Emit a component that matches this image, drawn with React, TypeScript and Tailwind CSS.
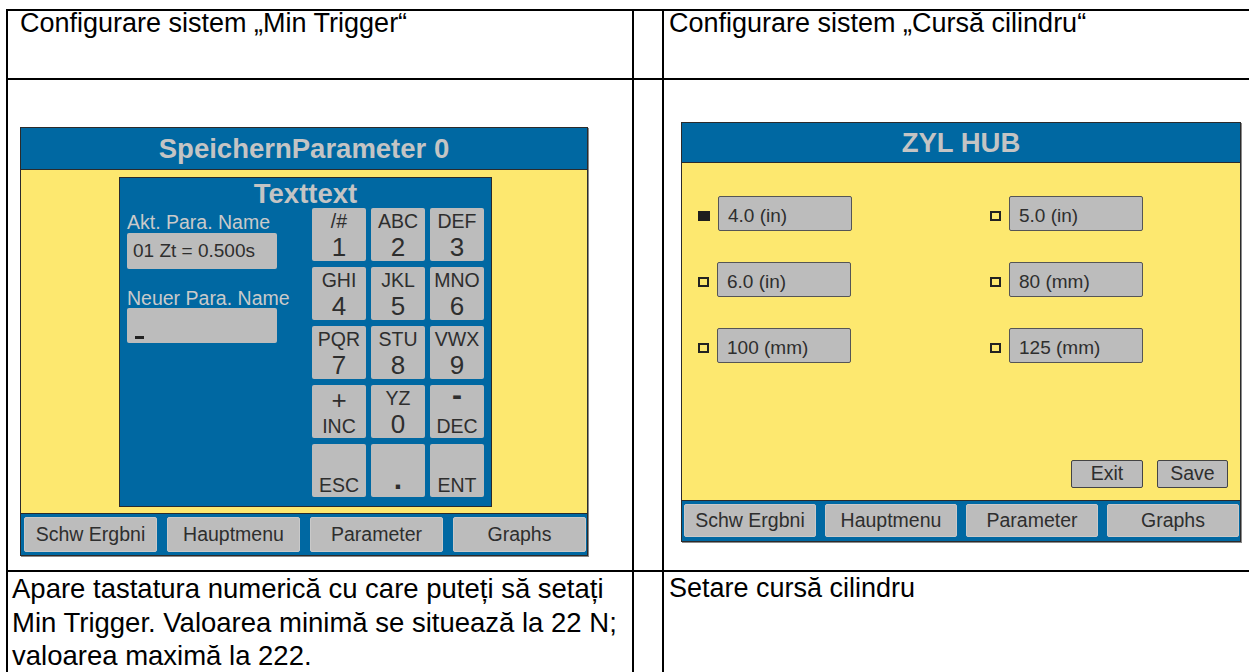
type KeyDef = { top?: string; num?: string; bottom?: string; sign?: string; dot?: boolean };

const keys: KeyDef[] = [
  { top: '/#', num: '1' },
  { top: 'ABC', num: '2' },
  { top: 'DEF', num: '3' },
  { top: 'GHI', num: '4' },
  { top: 'JKL', num: '5' },
  { top: 'MNO', num: '6' },
  { top: 'PQR', num: '7' },
  { top: 'STU', num: '8' },
  { top: 'VWX', num: '9' },
  { sign: '+', bottom: 'INC' },
  { top: 'YZ', num: '0' },
  { sign: '-', bottom: 'DEC' },
  { bottom: 'ESC' },
  { dot: true },
  { bottom: 'ENT' },
];

const options = [
  { label: '4.0 (in)', checked: true },
  { label: '5.0 (in)', checked: false },
  { label: '6.0 (in)', checked: false },
  { label: '80 (mm)', checked: false },
  { label: '100 (mm)', checked: false },
  { label: '125 (mm)', checked: false },
];

const navItems = ['Schw Ergbni', 'Hauptmenu', 'Parameter', 'Graphs'];

function Key({ top, num, bottom, sign, dot }: KeyDef) {
  return (
    <div className="flex h-[53px] w-[54px] flex-col items-center rounded-[2px] bg-[#bcbcbc] text-[#2e2e2e]">
      {num && (
        <>
          <span className="mt-[4px] text-[19.5px] leading-[19px]">{top}</span>
          <span className="mt-[3px] text-[26px] leading-[26px]">{num}</span>
        </>
      )}
      {sign === '+' && <span className="mt-[3px] text-[26px] leading-[24px]">+</span>}
      {sign === '-' && <span className="text-[30px] font-bold leading-[20px]">-</span>}
      {bottom && <span className="mb-[2px] mt-auto text-[19.5px] leading-[19px]">{bottom}</span>}
      {dot && <span className="mb-[8px] mt-auto text-[30px] font-bold leading-[20px]">.</span>}
    </div>
  );
}

function NavBar({ big }: { big?: boolean }) {
  return (
    <div
      className={
        big
          ? 'flex h-[42px] gap-[10px] border-t border-[#2b2b2b] bg-[#0068a2] pl-[3px] pt-[3px]'
          : 'flex h-[41px] gap-[9px] border-t border-[#2b2b2b] bg-[#0068a2] pl-[2px] pt-[3px]'
      }
    >
      {navItems.map((item) => (
        <div
          key={item}
          className={
            big
              ? 'flex h-[35px] w-[133px] items-center justify-center rounded-[2px] border border-[#c9c9c9] bg-[#bcbcbc] text-[19.5px] text-[#2e2e2e]'
              : 'flex h-[33px] w-[132px] items-center justify-center rounded-[2px] border border-[#c9c9c9] bg-[#bcbcbc] text-[19.5px] text-[#2e2e2e]'
          }
        >
          {item}
        </div>
      ))}
    </div>
  );
}

function SaveParamScreen() {
  return (
    <div className="flex w-[568px] flex-col border border-[#2b2b2b] bg-[#fde86f] shadow-[1px_1px_0_#8a8a8a]">
      <div className="flex h-[42px] items-center justify-center border-b border-[#2b2b2b] bg-[#0068a2] text-[27.5px] font-bold text-[#c4c4c4]">
        SpeichernParameter 0
      </div>
      <div className="h-[343px] pl-[98px] pt-[7px]">
        <div className="flex h-[330px] w-[373px] flex-col border border-[#2b2b2b] bg-[#0068a2]">
          <div className="h-[30px] pt-[2px] text-center text-[27.5px] font-bold leading-[27px] text-[#c4c4c4]">
            Texttext
          </div>
          <div className="flex">
            <div className="ml-[7px] w-[150px]">
              <div className="mt-[4px] whitespace-nowrap text-[19.5px] leading-[20px] text-[#cacaca]">Akt. Para. Name</div>
              <div className="mt-[1px] flex h-[36px] items-center rounded-[2px] bg-[#bcbcbc] pl-[6px] text-[19px] text-[#2e2e2e]">
                01 Zt = 0.500s
              </div>
              <div className="mt-[19px] whitespace-nowrap text-[19.5px] leading-[20px] text-[#cacaca]">Neuer Para. Name</div>
              <div className="flex h-[35px] items-end rounded-[2px] bg-[#bcbcbc] pb-[4px] pl-[8px]">
                <div className="h-[3px] w-[9px] bg-[#222]" />
              </div>
            </div>
            <div className="ml-auto mr-[7px] grid grid-cols-[54px_54px_54px] gap-x-[5px] gap-y-[6px]">
              {keys.map((k, i) => (
                <Key key={i} {...k} />
              ))}
            </div>
          </div>
        </div>
      </div>
      <NavBar big />
    </div>
  );
}

function ZylHubScreen() {
  return (
    <div className="flex w-[560px] flex-col border border-[#2b2b2b] bg-[#fde86f] shadow-[1px_1px_0_#8a8a8a]">
      <div className="flex h-[40px] items-center justify-center border-b border-[#2b2b2b] bg-[#0068a2] text-[27.5px] font-bold text-[#c4c4c4]">
        ZYL HUB
      </div>
      <div className="flex h-[337px] flex-col">
        <div className="mt-[33px] grid grid-cols-[292px_auto] gap-y-[31px] pl-[16px]">
          {options.map((o) => (
            <div key={o.label} className="flex items-center gap-[8px]">
              <div
                className={
                  o.checked
                    ? 'mt-[5px] h-[10px] w-[12px] bg-[#1e1e1e]'
                    : 'mt-[5px] h-[10px] w-[11px] border-2 border-[#222]'
                }
              />
              <div className="flex h-[35px] w-[134px] items-center rounded-[2px] border border-[#555] bg-[#bcbcbc] pl-[9px] pt-[6px] text-[19px] text-[#2e2e2e]">
                {o.label}
              </div>
            </div>
          ))}
        </div>
        <div className="mb-[12px] mr-[12px] mt-auto flex justify-end gap-[14px]">
          <div className="flex h-[28px] w-[72px] items-center justify-center rounded-[2px] border border-[#444] bg-[#bcbcbc] text-[19.5px] text-[#2e2e2e]">
            Exit
          </div>
          <div className="flex h-[28px] w-[71px] items-center justify-center rounded-[2px] border border-[#444] bg-[#bcbcbc] text-[19.5px] text-[#2e2e2e]">
            Save
          </div>
        </div>
      </div>
      <NavBar />
    </div>
  );
}

export default function App() {
  return (
    <div className="h-[672px] w-[1249px] overflow-hidden bg-white pl-[6px] pt-[9px] font-['Liberation_Sans',Arial,sans-serif] text-black">
      <div className="grid grid-cols-[626px_30px_1fr] grid-rows-[69px_492px_120px]">
        <div className="whitespace-nowrap border-l-2 border-t-2 border-black pl-[12px] text-[27px] leading-[24px]">
          Configurare sistem „Min Trigger“
        </div>
        <div className="border-l-2 border-t-2 border-black" />
        <div className="whitespace-nowrap border-l-2 border-t-2 border-black pl-[5px] text-[27px] leading-[24px]">
          Configurare sistem „Cursă cilindru“
        </div>

        <div className="border-l-2 border-t-2 border-black pl-[12px] pt-[47px]">
          <SaveParamScreen />
        </div>
        <div className="border-l-2 border-t-2 border-black" />
        <div className="border-l-2 border-t-2 border-black pl-[17px] pt-[42px]">
          <ZylHubScreen />
        </div>

        <div className="whitespace-nowrap border-l-2 border-t-2 border-black pl-[4px] text-[27.5px] leading-[33.5px]">
          Apare tastatura numerică cu care puteți să setați
          <br />
          Min Trigger. Valoarea minimă se situează la 22 N;
          <br />
          valoarea maximă la 222.
        </div>
        <div className="border-l-2 border-t-2 border-black" />
        <div className="whitespace-nowrap border-l-2 border-t-2 border-black pl-[5px] text-[27px] leading-[33.5px]">
          Setare cursă cilindru
        </div>
      </div>
    </div>
  );
}
